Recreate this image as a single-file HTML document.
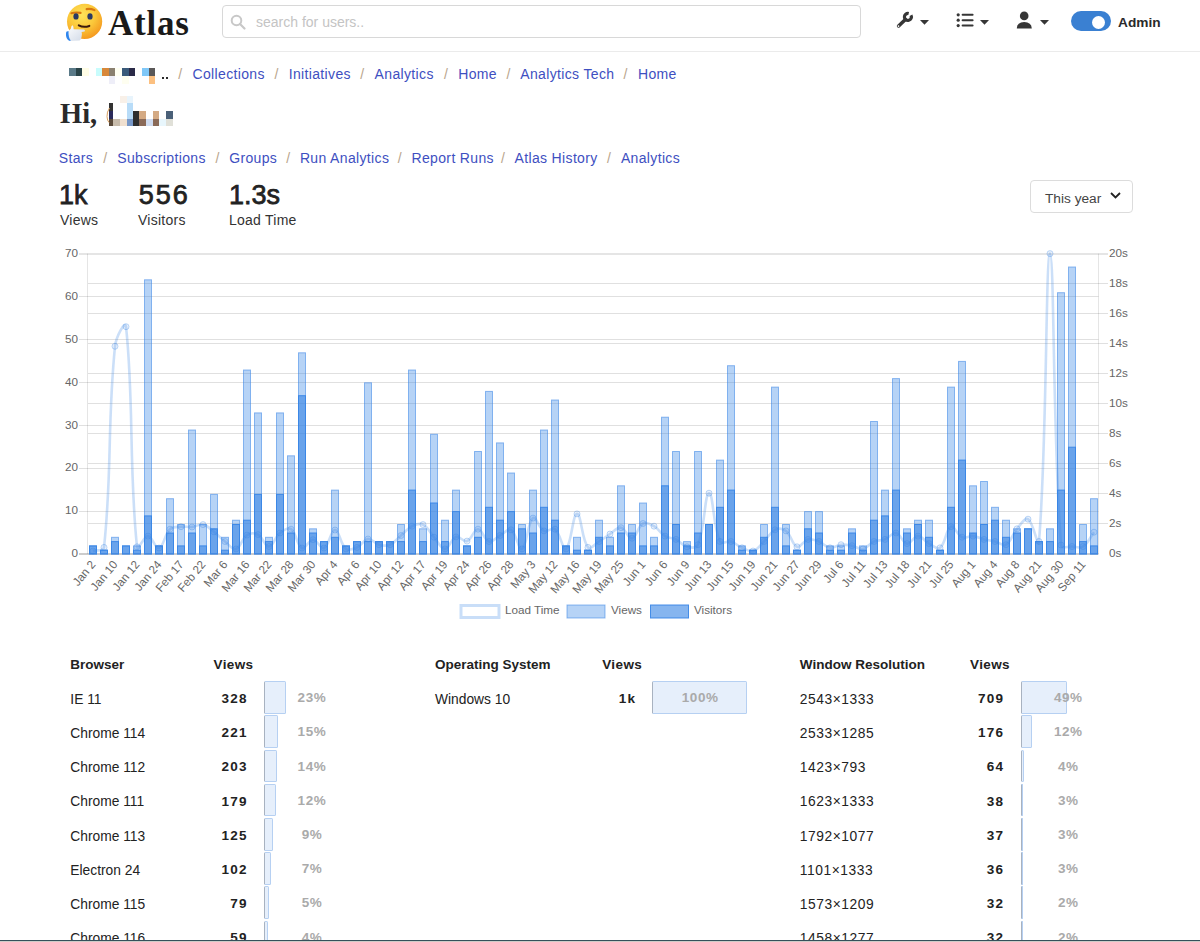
<!DOCTYPE html>
<html><head><meta charset="utf-8">
<style>
*{box-sizing:border-box;margin:0;padding:0}
html,body{width:1200px;height:942px;overflow:hidden;background:#fff}
.sep{font-size:14px;color:#b5b0aa}
body{position:relative;font-family:"Liberation Sans",sans-serif;color:#212529}
.a{position:absolute;white-space:nowrap}
.hdr{position:absolute;left:0;top:0;width:1200px;height:52px;border-bottom:1px solid #ebebeb}
.logo{font-family:"Liberation Serif",serif;font-weight:bold;font-size:36px;color:#1a1a1a}
.search{left:222px;top:5px;width:639px;height:33px;border:1px solid #d8d8d8;border-radius:4px}
.ph{font-size:14px;color:#c4c4c4}
.lnk{font-size:14px;color:#3e4fc1;letter-spacing:0.35px}
.sep{font-size:14px;color:#b9a58c}
.hi{font-family:"Liberation Serif",serif;font-weight:bold;font-size:28.5px;color:#2a2a2a}
.stat{font-size:27px;font-weight:normal;color:#222;-webkit-text-stroke:0.75px #222}
.slab{font-size:14px;color:#333;letter-spacing:0.25px}
.tk{font-family:"Liberation Sans",sans-serif;font-size:11.7px;fill:#666}
.th{font-size:13.5px;font-weight:bold;color:#222;line-height:15px;letter-spacing:0px}
.td{font-size:13.8px;color:#222;line-height:15px;letter-spacing:0px}
.tn{font-size:13.5px;font-weight:bold;color:#222;text-align:right;line-height:15px;letter-spacing:1.2px;margin-right:-1.2px}
.pb{position:absolute;height:32.5px;background:#e6effb;border:1px solid #b6d0f2;border-left-color:#a8b2c0;border-radius:1.5px}
.pt{font-size:13.5px;font-weight:bold;color:#aaa;text-align:center;width:95px;line-height:15px;letter-spacing:0.6px;text-indent:0.6px}
.px{position:absolute}
</style></head><body>
<div class="hdr"></div>
<svg class="a" style="left:62px;top:0px" width="44" height="44" viewBox="0 0 44 44">
<defs><radialGradient id="fg" cx="0.42" cy="0.32" r="0.75"><stop offset="0" stop-color="#fde45a"/><stop offset="0.5" stop-color="#fbc83a"/><stop offset="1" stop-color="#f3901a"/></radialGradient>
<linearGradient id="hg" x1="0" y1="0" x2="1" y2="1"><stop offset="0" stop-color="#ffffff"/><stop offset="1" stop-color="#cfd8e6"/></linearGradient></defs>
<circle cx="22.6" cy="21.4" r="17.6" fill="url(#fg)"/>
<path d="M9.4 13.2 Q13.8 12.0 18.6 12.9" stroke="#d9770f" stroke-width="2.1" fill="none" stroke-linecap="round"/>
<path d="M24.6 9.1 Q28.5 8.4 32.5 10.1" stroke="#d9770f" stroke-width="2.1" fill="none" stroke-linecap="round"/>
<ellipse cx="14" cy="16.4" rx="2.6" ry="3.2" fill="#2c3a63"/>
<ellipse cx="28" cy="16.4" rx="2.6" ry="3.2" fill="#2c3a63"/>
<path d="M16.8 25.3 Q21.5 28.0 27.3 25.9" stroke="#3d1a0c" stroke-width="2.1" fill="none" stroke-linecap="round"/>
<path d="M4.6 32 Q7.5 30.6 8.8 28.8 Q9.4 25.6 10.3 25.2 Q11.6 25.6 11.6 29.3 L22.2 29.4 Q23.6 30.2 22.6 31.4 L19.6 32.1 Q20.4 34.5 19.6 36.8 Q19.6 39.2 17.6 40.4 L8.2 41 Q5 39.6 4.6 32 Z" fill="url(#hg)"/>
<path d="M4.3 31.8 Q3.2 36.5 5.6 39.6 Q6.6 40.8 8.2 41.1 L8.6 40.2 Q6.3 37.6 6.5 31 Z" fill="#2f86ee"/>
</svg>

<div class="a logo" style="left:108px;top:3.5px;font-size:35px;letter-spacing:0.8px">Atlas</div>
<div class="a search"></div>
<svg class="a" style="left:230px;top:14px" width="16" height="16" viewBox="0 0 16 16"><circle cx="6.5" cy="6.5" r="4.8" fill="none" stroke="#c8c8c8" stroke-width="2"/><path d="M10 10 L14.5 14.5" stroke="#c8c8c8" stroke-width="2.2" stroke-linecap="round"/></svg>
<div class="a ph" style="left:256px;top:14px">search for users..</div>
<svg class="a" style="left:894px;top:10px" width="20" height="20" viewBox="0 0 20 20">
<path d="M16.99 5.26 A3.5 3.5 0 1 1 14.69 3.49" stroke="#363636" stroke-width="3.2" fill="none"/>
<path d="M4.6 16.0 L11.4 9.4" stroke="#363636" stroke-width="3.5" stroke-linecap="round"/>
<circle cx="4.5" cy="16.1" r="0.85" fill="#fff"/>
</svg>
<svg class="a" style="left:919px;top:19px" width="11" height="7" viewBox="0 0 11 7"><path d="M1 1 H10 L5.5 5.8 Z" fill="#363636"/></svg>
<svg class="a" style="left:955px;top:12px" width="20" height="17" viewBox="0 0 20 17">
<circle cx="3.2" cy="2.8" r="1.6" fill="#363636"/><circle cx="3.2" cy="8.2" r="1.6" fill="#363636"/><circle cx="3.2" cy="13.6" r="1.6" fill="#363636"/>
<path d="M7.6 2.8 H17.6 M7.6 8.2 H17.6 M7.6 13.6 H17.6" stroke="#363636" stroke-width="2" stroke-linecap="round"/>
</svg>
<svg class="a" style="left:979px;top:19px" width="11" height="7" viewBox="0 0 11 7"><path d="M1 1 H10 L5.5 5.8 Z" fill="#363636"/></svg>
<svg class="a" style="left:1015px;top:10px" width="18" height="20" viewBox="0 0 18 20">
<circle cx="9.2" cy="5.9" r="4.3" fill="#363636"/>
<path d="M1.8 18.4 Q2 12.2 9.2 12.1 Q16.4 12.2 16.8 18.4 Z" fill="#363636"/>
</svg>
<svg class="a" style="left:1039px;top:19px" width="11" height="7" viewBox="0 0 11 7"><path d="M1 1 H10 L5.5 5.8 Z" fill="#363636"/></svg>

<div class="a" style="left:1071px;top:11px;width:40px;height:20px;border-radius:10px;background:#3a80d2"></div>
<div class="a" style="left:1091.5px;top:15.5px;width:13px;height:13px;border-radius:50%;background:#fff"></div>
<div class="a" style="left:1118px;top:14.5px;font-size:13.7px;font-weight:bold;color:#2a2a2a">Admin</div>
<div class="px" style="left:69px;top:68.3px;width:6.700000000000003px;height:8.0px;background:#5a7a88"></div><div class="px" style="left:75.7px;top:68.3px;width:6.299999999999997px;height:8.0px;background:#2a4448"></div><div class="px" style="left:82px;top:68.3px;width:6.700000000000003px;height:8.0px;background:#fffde6"></div><div class="px" style="left:95.7px;top:68.3px;width:6.599999999999994px;height:8.0px;background:#c8fcfc"></div><div class="px" style="left:102.3px;top:68.3px;width:6.700000000000003px;height:8.0px;background:#d8883a"></div><div class="px" style="left:109px;top:68.3px;width:6.299999999999997px;height:8.0px;background:#8a8070"></div><div class="px" style="left:115.3px;top:68.3px;width:6.700000000000003px;height:8.0px;background:#fffff2"></div><div class="px" style="left:122.3px;top:68.3px;width:6.3999999999999915px;height:8.0px;background:#3a5a7a"></div><div class="px" style="left:128.7px;top:68.3px;width:6.300000000000011px;height:8.0px;background:#2a2a48"></div><div class="px" style="left:142px;top:68.3px;width:6.75px;height:8.0px;background:#80c8f8"></div><div class="px" style="left:148.75px;top:68.3px;width:6.25px;height:8.0px;background:#5a5858"></div><div class="px" style="left:109px;top:76.3px;width:6.299999999999997px;height:8.0px;background:#eeeef8"></div><div class="px" style="left:122.3px;top:76.3px;width:6.3999999999999915px;height:8.0px;background:#fefef0"></div><div class="px" style="left:148.75px;top:76.3px;width:6.25px;height:8.0px;background:#fcc080"></div>
<div class="px" style="left:162px;top:77px;width:2px;height:2px;background:#2a2a2a"></div><div class="px" style="left:166px;top:77px;width:2px;height:2px;background:#2a2a2a"></div>
<div class="a sep" style="left:178.2px;top:66.4px">/</div>
<div class="a sep" style="left:274.4px;top:66.4px">/</div>
<div class="a sep" style="left:360.3px;top:66.4px">/</div>
<div class="a sep" style="left:443.9px;top:66.4px">/</div>
<div class="a sep" style="left:506.4px;top:66.4px">/</div>
<div class="a sep" style="left:623.45px;top:66.4px">/</div>
<div class="a lnk" style="left:192.5px;top:66.4px">Collections</div>
<div class="a lnk" style="left:288.7px;top:66.4px">Initiatives</div>
<div class="a lnk" style="left:374.6px;top:66.4px">Analytics</div>
<div class="a lnk" style="left:458.2px;top:66.4px">Home</div>
<div class="a lnk" style="left:520.25px;top:66.4px">Analytics Tech</div>
<div class="a lnk" style="left:638px;top:66.4px">Home</div>
<div class="a hi" style="left:60px;top:97.5px">Hi,</div>
<div class="px" style="left:120px;top:96px;width:7px;height:7.200000000000003px;background:#f8f0e8"></div><div class="px" style="left:127px;top:96px;width:6px;height:7.200000000000003px;background:#e8f4fc"></div><div class="px" style="left:109px;top:103.2px;width:4px;height:7.3999999999999915px;background:#333"></div><div class="px" style="left:127px;top:103.2px;width:6px;height:7.3999999999999915px;background:#b8dcf8"></div><div class="px" style="left:109px;top:110.6px;width:4px;height:8.100000000000009px;background:#2a2a5a"></div><div class="px" style="left:127px;top:110.6px;width:6px;height:8.100000000000009px;background:#b8dcf8"></div><div class="px" style="left:133px;top:110.6px;width:6px;height:8.100000000000009px;background:#2e2e2e"></div><div class="px" style="left:139px;top:110.6px;width:7px;height:8.100000000000009px;background:#d4aa84"></div><div class="px" style="left:152.5px;top:110.6px;width:6.5px;height:8.100000000000009px;background:#d4aa84"></div><div class="px" style="left:166px;top:110.6px;width:6.5px;height:8.100000000000009px;background:#4a6078"></div><div class="px" style="left:109px;top:118.7px;width:4px;height:7.049999999999997px;background:#5a4a3a"></div><div class="px" style="left:113px;top:118.7px;width:7px;height:7.049999999999997px;background:#c8bcac"></div><div class="px" style="left:120px;top:118.7px;width:7px;height:7.049999999999997px;background:#f0e0d0"></div><div class="px" style="left:127px;top:118.7px;width:6px;height:7.049999999999997px;background:#7898c8"></div><div class="px" style="left:133px;top:118.7px;width:6px;height:7.049999999999997px;background:#2e2e2e"></div><div class="px" style="left:139px;top:118.7px;width:7px;height:7.049999999999997px;background:#8a6a58"></div><div class="px" style="left:146px;top:118.7px;width:6.5px;height:7.049999999999997px;background:#d0dcf0"></div><div class="px" style="left:152.5px;top:118.7px;width:6.5px;height:7.049999999999997px;background:#8a6a58"></div><div class="px" style="left:159px;top:118.7px;width:7px;height:7.049999999999997px;background:#e8f6fc"></div><div class="px" style="left:166px;top:118.7px;width:6.5px;height:7.049999999999997px;background:#e0e0d8"></div>
<svg class="a" style="left:104px;top:102px" width="8" height="24" viewBox="0 0 8 24"><path d="M5.5 6 Q2.8 10 3 14.5 Q3.2 18.5 5 20.5" stroke="#d9a060" stroke-width="1" fill="none"/></svg>
<div class="a sep" style="left:103.2px;top:150px">/</div>
<div class="a sep" style="left:215.5px;top:150px">/</div>
<div class="a sep" style="left:286.2px;top:150px">/</div>
<div class="a sep" style="left:397.8px;top:150px">/</div>
<div class="a sep" style="left:501.0px;top:150px">/</div>
<div class="a sep" style="left:606.9000000000001px;top:150px">/</div>
<div class="a lnk" style="left:58.8px;top:150px">Stars</div>
<div class="a lnk" style="left:117.2px;top:150px">Subscriptions</div>
<div class="a lnk" style="left:229.2px;top:150px">Groups</div>
<div class="a lnk" style="left:299.9px;top:150px">Run Analytics</div>
<div class="a lnk" style="left:411.5px;top:150px">Report Runs</div>
<div class="a lnk" style="left:514.5px;top:150px">Atlas History</div>
<div class="a lnk" style="left:620.9px;top:150px">Analytics</div>
<div class="a stat" style="left:59px;top:180px">1k</div>
<div class="a stat" style="left:138.8px;top:180px;letter-spacing:1.9px">556</div>
<div class="a stat" style="left:229px;top:180px">1.3s</div>
<div class="a slab" style="left:60px;top:212px">Views</div>
<div class="a slab" style="left:138px;top:212px">Visitors</div>
<div class="a slab" style="left:229px;top:212px">Load Time</div>
<div class="a" style="left:1030px;top:180px;width:103px;height:33px;border:1px solid #dcdcdc;border-radius:4px"></div>
<div class="a" style="left:1045px;top:190.5px;font-size:13.7px;color:#444">This year</div>
<svg class="a" style="left:1109px;top:191px" width="13" height="9" viewBox="0 0 13 9"><path d="M2 2 L6.5 6.5 L11 2" fill="none" stroke="#222" stroke-width="1.8"/></svg>
<svg class="chart" width="1200" height="942" viewBox="0 0 1200 942" style="position:absolute;left:0;top:0">
<path d="M79 511.5H1098.5 M79 468.5H1098.5 M79 425.5H1098.5 M79 382.5H1098.5 M79 339.5H1098.5 M79 296.5H1098.5 M88 523.5H1108 M88 493.5H1108 M88 463.5H1108 M88 433.5H1108 M88 403.5H1108 M88 373.5H1108 M88 343.5H1108 M88 313.5H1108 M88 283.5H1108" stroke="rgba(0,0,0,0.12)" stroke-width="1" fill="none"/>
<path d="M87.5 253.6V554.0 M1098.5 253.6V554.0" stroke="rgba(0,0,0,0.1)" stroke-width="1" fill="none"/>
<path d="M79 254H1098.5 M88 254H1108" stroke="rgba(0,0,0,0.1)" stroke-width="2" fill="none"/>
<path d="M79 554.0H1098.5" stroke="rgba(0,0,0,0.2)" stroke-width="2" fill="none"/>
<text x="78" y="557.2" text-anchor="end" class="tk">0</text>
<text x="78" y="514.3" text-anchor="end" class="tk">10</text>
<text x="78" y="471.4" text-anchor="end" class="tk">20</text>
<text x="78" y="428.5" text-anchor="end" class="tk">30</text>
<text x="78" y="385.5" text-anchor="end" class="tk">40</text>
<text x="78" y="342.6" text-anchor="end" class="tk">50</text>
<text x="78" y="299.7" text-anchor="end" class="tk">60</text>
<text x="78" y="256.8" text-anchor="end" class="tk">70</text>
<text x="1109" y="557.2" class="tk">0s</text>
<text x="1109" y="527.2" class="tk">2s</text>
<text x="1109" y="497.1" class="tk">4s</text>
<text x="1109" y="467.1" class="tk">6s</text>
<text x="1109" y="437.0" class="tk">8s</text>
<text x="1109" y="407.0" class="tk">10s</text>
<text x="1109" y="377.0" class="tk">12s</text>
<text x="1109" y="346.9" class="tk">14s</text>
<text x="1109" y="316.9" class="tk">16s</text>
<text x="1109" y="286.8" class="tk">18s</text>
<text x="1109" y="256.8" class="tk">20s</text>
<g fill="rgba(54,132,229,0.36)" stroke="rgba(54,132,229,0.55)" stroke-width="1"><rect x="89.5" y="545.9" width="7" height="8.1"/><rect x="100.5" y="550.2" width="7" height="3.8"/><rect x="111.5" y="537.3" width="7" height="16.7"/><rect x="122.5" y="545.9" width="7" height="8.1"/><rect x="133.5" y="545.9" width="7" height="8.1"/><rect x="144.5" y="279.8" width="7" height="274.2"/><rect x="155.5" y="545.9" width="7" height="8.1"/><rect x="166.5" y="498.7" width="7" height="55.3"/><rect x="177.5" y="524.5" width="7" height="29.5"/><rect x="188.5" y="430.0" width="7" height="124.0"/><rect x="199.5" y="524.5" width="7" height="29.5"/><rect x="210.5" y="494.4" width="7" height="59.6"/><rect x="221.5" y="537.3" width="7" height="16.7"/><rect x="232.5" y="520.2" width="7" height="33.8"/><rect x="243.5" y="370.0" width="7" height="184.0"/><rect x="254.5" y="412.9" width="7" height="141.1"/><rect x="265.5" y="537.3" width="7" height="16.7"/><rect x="276.5" y="412.9" width="7" height="141.1"/><rect x="287.5" y="455.8" width="7" height="98.2"/><rect x="298.5" y="352.8" width="7" height="201.2"/><rect x="309.5" y="528.8" width="7" height="25.2"/><rect x="320.5" y="541.6" width="7" height="12.4"/><rect x="331.5" y="490.1" width="7" height="63.9"/><rect x="342.5" y="545.9" width="7" height="8.1"/><rect x="353.5" y="541.6" width="7" height="12.4"/><rect x="364.5" y="382.8" width="7" height="171.2"/><rect x="375.5" y="541.6" width="7" height="12.4"/><rect x="386.5" y="541.6" width="7" height="12.4"/><rect x="397.5" y="524.5" width="7" height="29.5"/><rect x="408.5" y="370.0" width="7" height="184.0"/><rect x="419.5" y="528.8" width="7" height="25.2"/><rect x="430.5" y="434.3" width="7" height="119.7"/><rect x="441.5" y="520.2" width="7" height="33.8"/><rect x="452.5" y="490.1" width="7" height="63.9"/><rect x="463.5" y="545.9" width="7" height="8.1"/><rect x="474.5" y="451.5" width="7" height="102.5"/><rect x="485.5" y="391.4" width="7" height="162.6"/><rect x="496.5" y="442.9" width="7" height="111.1"/><rect x="507.5" y="473.0" width="7" height="81.0"/><rect x="518.5" y="524.5" width="7" height="29.5"/><rect x="529.5" y="490.1" width="7" height="63.9"/><rect x="540.5" y="430.0" width="7" height="124.0"/><rect x="551.5" y="400.0" width="7" height="154.0"/><rect x="562.5" y="545.9" width="7" height="8.1"/><rect x="573.5" y="537.3" width="7" height="16.7"/><rect x="584.5" y="550.2" width="7" height="3.8"/><rect x="595.5" y="520.2" width="7" height="33.8"/><rect x="606.5" y="537.3" width="7" height="16.7"/><rect x="617.5" y="485.8" width="7" height="68.2"/><rect x="628.5" y="524.5" width="7" height="29.5"/><rect x="639.5" y="503.0" width="7" height="51.0"/><rect x="650.5" y="537.3" width="7" height="16.7"/><rect x="661.5" y="417.2" width="7" height="136.8"/><rect x="672.5" y="451.5" width="7" height="102.5"/><rect x="683.5" y="541.6" width="7" height="12.4"/><rect x="694.5" y="451.5" width="7" height="102.5"/><rect x="705.5" y="524.5" width="7" height="29.5"/><rect x="716.5" y="460.1" width="7" height="93.9"/><rect x="727.5" y="365.7" width="7" height="188.3"/><rect x="738.5" y="545.9" width="7" height="8.1"/><rect x="749.5" y="550.2" width="7" height="3.8"/><rect x="760.5" y="524.5" width="7" height="29.5"/><rect x="771.5" y="387.1" width="7" height="166.9"/><rect x="782.5" y="524.5" width="7" height="29.5"/><rect x="793.5" y="550.2" width="7" height="3.8"/><rect x="804.5" y="511.6" width="7" height="42.4"/><rect x="815.5" y="511.6" width="7" height="42.4"/><rect x="826.5" y="545.9" width="7" height="8.1"/><rect x="837.5" y="545.9" width="7" height="8.1"/><rect x="848.5" y="528.8" width="7" height="25.2"/><rect x="859.5" y="545.9" width="7" height="8.1"/><rect x="870.5" y="421.5" width="7" height="132.5"/><rect x="881.5" y="490.1" width="7" height="63.9"/><rect x="892.5" y="378.6" width="7" height="175.4"/><rect x="903.5" y="528.8" width="7" height="25.2"/><rect x="914.5" y="520.2" width="7" height="33.8"/><rect x="925.5" y="520.2" width="7" height="33.8"/><rect x="936.5" y="550.2" width="7" height="3.8"/><rect x="947.5" y="387.1" width="7" height="166.9"/><rect x="958.5" y="361.4" width="7" height="192.6"/><rect x="969.5" y="485.8" width="7" height="68.2"/><rect x="980.5" y="481.5" width="7" height="72.5"/><rect x="991.5" y="507.3" width="7" height="46.7"/><rect x="1002.5" y="520.2" width="7" height="33.8"/><rect x="1013.5" y="528.8" width="7" height="25.2"/><rect x="1024.5" y="528.8" width="7" height="25.2"/><rect x="1035.5" y="541.6" width="7" height="12.4"/><rect x="1046.5" y="528.8" width="7" height="25.2"/><rect x="1057.5" y="292.7" width="7" height="261.3"/><rect x="1068.5" y="267.0" width="7" height="287.0"/><rect x="1079.5" y="524.5" width="7" height="29.5"/><rect x="1090.5" y="498.7" width="7" height="55.3"/></g>
<g fill="rgba(54,132,229,0.6)" stroke="rgba(54,132,229,0.9)" stroke-width="1"><rect x="89.5" y="545.9" width="7" height="8.1"/><rect x="100.5" y="550.2" width="7" height="3.8"/><rect x="111.5" y="541.6" width="7" height="12.4"/><rect x="122.5" y="545.9" width="7" height="8.1"/><rect x="133.5" y="550.2" width="7" height="3.8"/><rect x="144.5" y="515.9" width="7" height="38.1"/><rect x="155.5" y="545.9" width="7" height="8.1"/><rect x="166.5" y="533.0" width="7" height="21.0"/><rect x="177.5" y="545.9" width="7" height="8.1"/><rect x="188.5" y="533.0" width="7" height="21.0"/><rect x="199.5" y="545.9" width="7" height="8.1"/><rect x="210.5" y="528.8" width="7" height="25.2"/><rect x="221.5" y="550.2" width="7" height="3.8"/><rect x="232.5" y="524.5" width="7" height="29.5"/><rect x="243.5" y="520.2" width="7" height="33.8"/><rect x="254.5" y="494.4" width="7" height="59.6"/><rect x="265.5" y="541.6" width="7" height="12.4"/><rect x="276.5" y="494.4" width="7" height="59.6"/><rect x="287.5" y="533.0" width="7" height="21.0"/><rect x="298.5" y="395.7" width="7" height="158.3"/><rect x="309.5" y="533.0" width="7" height="21.0"/><rect x="320.5" y="541.6" width="7" height="12.4"/><rect x="331.5" y="537.3" width="7" height="16.7"/><rect x="342.5" y="545.9" width="7" height="8.1"/><rect x="353.5" y="541.6" width="7" height="12.4"/><rect x="364.5" y="541.6" width="7" height="12.4"/><rect x="375.5" y="541.6" width="7" height="12.4"/><rect x="386.5" y="541.6" width="7" height="12.4"/><rect x="397.5" y="541.6" width="7" height="12.4"/><rect x="408.5" y="490.1" width="7" height="63.9"/><rect x="419.5" y="541.6" width="7" height="12.4"/><rect x="430.5" y="503.0" width="7" height="51.0"/><rect x="441.5" y="541.6" width="7" height="12.4"/><rect x="452.5" y="511.6" width="7" height="42.4"/><rect x="463.5" y="545.9" width="7" height="8.1"/><rect x="474.5" y="537.3" width="7" height="16.7"/><rect x="485.5" y="507.3" width="7" height="46.7"/><rect x="496.5" y="520.2" width="7" height="33.8"/><rect x="507.5" y="511.6" width="7" height="42.4"/><rect x="518.5" y="528.8" width="7" height="25.2"/><rect x="529.5" y="533.0" width="7" height="21.0"/><rect x="540.5" y="507.3" width="7" height="46.7"/><rect x="551.5" y="520.2" width="7" height="33.8"/><rect x="562.5" y="545.9" width="7" height="8.1"/><rect x="573.5" y="550.2" width="7" height="3.8"/><rect x="584.5" y="550.2" width="7" height="3.8"/><rect x="595.5" y="537.3" width="7" height="16.7"/><rect x="606.5" y="545.9" width="7" height="8.1"/><rect x="617.5" y="533.0" width="7" height="21.0"/><rect x="628.5" y="533.0" width="7" height="21.0"/><rect x="639.5" y="545.9" width="7" height="8.1"/><rect x="650.5" y="545.9" width="7" height="8.1"/><rect x="661.5" y="485.8" width="7" height="68.2"/><rect x="672.5" y="524.5" width="7" height="29.5"/><rect x="683.5" y="545.9" width="7" height="8.1"/><rect x="694.5" y="533.0" width="7" height="21.0"/><rect x="705.5" y="524.5" width="7" height="29.5"/><rect x="716.5" y="507.3" width="7" height="46.7"/><rect x="727.5" y="490.1" width="7" height="63.9"/><rect x="738.5" y="550.2" width="7" height="3.8"/><rect x="749.5" y="550.2" width="7" height="3.8"/><rect x="760.5" y="537.3" width="7" height="16.7"/><rect x="771.5" y="507.3" width="7" height="46.7"/><rect x="782.5" y="545.9" width="7" height="8.1"/><rect x="793.5" y="550.2" width="7" height="3.8"/><rect x="804.5" y="528.8" width="7" height="25.2"/><rect x="815.5" y="533.0" width="7" height="21.0"/><rect x="826.5" y="550.2" width="7" height="3.8"/><rect x="837.5" y="550.2" width="7" height="3.8"/><rect x="848.5" y="533.0" width="7" height="21.0"/><rect x="859.5" y="550.2" width="7" height="3.8"/><rect x="870.5" y="520.2" width="7" height="33.8"/><rect x="881.5" y="515.9" width="7" height="38.1"/><rect x="892.5" y="490.1" width="7" height="63.9"/><rect x="903.5" y="533.0" width="7" height="21.0"/><rect x="914.5" y="524.5" width="7" height="29.5"/><rect x="925.5" y="537.3" width="7" height="16.7"/><rect x="936.5" y="550.2" width="7" height="3.8"/><rect x="947.5" y="507.3" width="7" height="46.7"/><rect x="958.5" y="460.1" width="7" height="93.9"/><rect x="969.5" y="533.0" width="7" height="21.0"/><rect x="980.5" y="524.5" width="7" height="29.5"/><rect x="991.5" y="520.2" width="7" height="33.8"/><rect x="1002.5" y="537.3" width="7" height="16.7"/><rect x="1013.5" y="533.0" width="7" height="21.0"/><rect x="1024.5" y="528.8" width="7" height="25.2"/><rect x="1035.5" y="541.6" width="7" height="12.4"/><rect x="1046.5" y="541.6" width="7" height="12.4"/><rect x="1057.5" y="490.1" width="7" height="63.9"/><rect x="1068.5" y="447.2" width="7" height="106.8"/><rect x="1079.5" y="541.6" width="7" height="12.4"/><rect x="1090.5" y="545.9" width="7" height="8.1"/></g>
<path d="M93.0 551.0 C97.4 549.6 103.5 551.8 104.0 547.4 C112.3 470.0 107.1 425.7 115.0 346.3 C115.9 337.4 125.2 319.3 126.0 326.7 C134.0 399.5 128.8 468.5 137.0 546.8 C137.6 552.2 143.7 535.9 148.0 536.1 C152.5 536.4 155.2 549.2 159.0 548.0 C164.0 546.4 164.2 534.8 170.0 529.2 C173.0 526.3 176.5 527.1 181.0 526.7 C185.3 526.2 187.7 527.4 192.0 527.0 C196.5 526.5 199.0 523.6 203.0 524.6 C207.8 525.6 209.8 528.7 214.0 531.9 C218.6 535.5 220.4 538.0 225.0 541.5 C229.2 544.8 232.2 550.0 236.0 548.9 C241.0 547.4 241.6 538.6 247.0 535.1 C250.4 532.9 254.4 532.8 258.0 534.6 C263.2 537.3 264.8 546.8 269.0 546.5 C273.6 546.1 274.7 537.1 280.0 533.0 C283.5 530.2 287.9 527.1 291.0 529.2 C296.7 533.1 296.6 545.4 302.0 548.0 C305.4 549.6 308.6 539.7 313.0 539.7 C317.4 539.7 320.5 549.5 324.0 548.0 C329.3 545.6 330.7 529.8 335.0 530.0 C339.5 530.2 340.2 544.3 346.0 548.9 C349.0 551.2 353.1 549.2 357.0 547.4 C361.9 545.2 363.4 539.6 368.0 539.0 C372.2 538.5 374.3 543.5 379.0 544.7 C383.1 545.8 386.2 546.3 390.0 544.7 C395.0 542.6 396.6 539.2 401.0 535.5 C405.4 531.8 407.0 528.7 412.0 526.2 C415.8 524.3 419.5 522.8 423.0 524.6 C428.3 527.2 429.5 532.2 434.0 537.2 C438.3 541.9 440.6 549.0 445.0 548.9 C449.4 548.8 450.9 538.7 456.0 536.9 C459.7 535.6 463.3 542.4 467.0 541.1 C472.1 539.3 473.6 529.1 478.0 529.2 C482.4 529.3 484.0 540.1 489.0 541.5 C492.8 542.6 495.6 537.9 500.0 535.5 C504.4 533.2 507.8 527.9 511.0 529.8 C516.6 533.2 518.5 550.8 522.0 548.9 C527.3 546.1 527.2 522.9 533.0 518.1 C536.0 515.7 538.7 528.2 544.0 530.9 C547.5 532.6 552.1 526.8 555.0 529.2 C560.9 534.0 562.7 551.2 566.0 548.9 C571.5 545.1 572.5 514.2 577.0 513.9 C581.3 513.6 581.5 539.2 588.0 547.4 C590.3 550.3 594.7 544.1 599.0 541.5 C603.5 538.8 605.5 536.9 610.0 534.0 C614.3 531.3 617.0 527.0 621.0 527.7 C625.8 528.6 628.0 539.0 632.0 538.2 C636.8 537.3 637.6 526.5 643.0 523.5 C646.4 521.7 650.2 524.0 654.0 526.2 C659.0 529.1 660.0 533.1 665.0 536.1 C668.8 538.4 671.9 537.4 676.0 539.4 C680.7 541.7 682.2 545.7 687.0 546.8 C691.0 547.8 696.5 548.4 698.0 544.7 C705.3 527.0 704.5 493.8 709.0 493.2 C713.3 492.6 712.8 525.7 720.0 541.5 C721.6 545.0 726.9 540.4 731.0 541.5 C735.7 542.9 737.4 545.9 742.0 547.8 C746.2 549.6 749.1 552.1 753.0 551.0 C757.9 549.6 759.8 545.6 764.0 541.5 C768.6 537.1 769.8 532.3 775.0 529.8 C778.6 528.1 782.8 528.4 786.0 530.9 C791.6 535.2 791.8 544.8 797.0 546.8 C800.6 548.2 803.2 540.6 808.0 539.4 C812.0 538.5 814.9 540.0 819.0 541.5 C823.7 543.3 825.4 547.2 830.0 547.8 C834.2 548.4 836.5 545.1 841.0 544.7 C845.3 544.3 847.7 544.9 852.0 545.7 C856.5 546.6 858.9 549.7 863.0 548.9 C867.7 548.0 869.2 543.6 874.0 541.5 C878.0 539.8 880.9 541.0 885.0 539.4 C889.7 537.6 892.0 532.2 896.0 533.0 C900.8 533.9 902.3 543.0 907.0 543.6 C911.1 544.2 913.6 536.1 918.0 536.1 C922.4 536.1 924.3 541.1 929.0 543.6 C933.1 545.8 937.1 550.1 940.0 547.8 C945.9 543.3 945.6 529.3 951.0 526.7 C954.4 525.0 956.9 535.0 962.0 537.2 C965.7 538.8 968.7 535.7 973.0 536.1 C977.5 536.6 979.5 538.3 984.0 539.4 C988.3 540.5 990.6 540.5 995.0 541.5 C999.4 542.6 1002.7 546.6 1006.0 544.7 C1011.5 541.5 1012.0 534.6 1017.0 528.8 C1020.8 524.4 1024.7 517.3 1028.0 519.2 C1033.5 522.4 1038.3 550.0 1039.0 541.5 C1047.1 443.8 1045.6 253.6 1050.0 253.6 C1054.4 254.3 1052.5 432.1 1061.0 545.0 C1061.3 549.3 1067.6 546.2 1072.0 546.5 C1076.4 546.8 1079.7 548.7 1083.0 546.5 C1088.5 542.9 1089.6 537.9 1094.0 532.2" stroke="rgba(54,132,229,0.26)" stroke-width="2.6" fill="none"/>
<g fill="rgba(54,132,229,0.1)" stroke="rgba(54,132,229,0.3)" stroke-width="1"><circle cx="93" cy="551.0" r="3"/><circle cx="104" cy="547.4" r="3"/><circle cx="115" cy="346.3" r="3"/><circle cx="126" cy="326.7" r="3"/><circle cx="137" cy="546.8" r="3"/><circle cx="148" cy="536.1" r="3"/><circle cx="159" cy="548.0" r="3"/><circle cx="170" cy="529.2" r="3"/><circle cx="181" cy="526.7" r="3"/><circle cx="192" cy="527.0" r="3"/><circle cx="203" cy="524.6" r="3"/><circle cx="214" cy="531.9" r="3"/><circle cx="225" cy="541.5" r="3"/><circle cx="236" cy="548.9" r="3"/><circle cx="247" cy="535.1" r="3"/><circle cx="258" cy="534.6" r="3"/><circle cx="269" cy="546.5" r="3"/><circle cx="280" cy="533.0" r="3"/><circle cx="291" cy="529.2" r="3"/><circle cx="302" cy="548.0" r="3"/><circle cx="313" cy="539.7" r="3"/><circle cx="324" cy="548.0" r="3"/><circle cx="335" cy="530.0" r="3"/><circle cx="346" cy="548.9" r="3"/><circle cx="357" cy="547.4" r="3"/><circle cx="368" cy="539.0" r="3"/><circle cx="379" cy="544.7" r="3"/><circle cx="390" cy="544.7" r="3"/><circle cx="401" cy="535.5" r="3"/><circle cx="412" cy="526.2" r="3"/><circle cx="423" cy="524.6" r="3"/><circle cx="434" cy="537.2" r="3"/><circle cx="445" cy="548.9" r="3"/><circle cx="456" cy="536.9" r="3"/><circle cx="467" cy="541.1" r="3"/><circle cx="478" cy="529.2" r="3"/><circle cx="489" cy="541.5" r="3"/><circle cx="500" cy="535.5" r="3"/><circle cx="511" cy="529.8" r="3"/><circle cx="522" cy="548.9" r="3"/><circle cx="533" cy="518.1" r="3"/><circle cx="544" cy="530.9" r="3"/><circle cx="555" cy="529.2" r="3"/><circle cx="566" cy="548.9" r="3"/><circle cx="577" cy="513.9" r="3"/><circle cx="588" cy="547.4" r="3"/><circle cx="599" cy="541.5" r="3"/><circle cx="610" cy="534.0" r="3"/><circle cx="621" cy="527.7" r="3"/><circle cx="632" cy="538.2" r="3"/><circle cx="643" cy="523.5" r="3"/><circle cx="654" cy="526.2" r="3"/><circle cx="665" cy="536.1" r="3"/><circle cx="676" cy="539.4" r="3"/><circle cx="687" cy="546.8" r="3"/><circle cx="698" cy="544.7" r="3"/><circle cx="709" cy="493.2" r="3"/><circle cx="720" cy="541.5" r="3"/><circle cx="731" cy="541.5" r="3"/><circle cx="742" cy="547.8" r="3"/><circle cx="753" cy="551.0" r="3"/><circle cx="764" cy="541.5" r="3"/><circle cx="775" cy="529.8" r="3"/><circle cx="786" cy="530.9" r="3"/><circle cx="797" cy="546.8" r="3"/><circle cx="808" cy="539.4" r="3"/><circle cx="819" cy="541.5" r="3"/><circle cx="830" cy="547.8" r="3"/><circle cx="841" cy="544.7" r="3"/><circle cx="852" cy="545.7" r="3"/><circle cx="863" cy="548.9" r="3"/><circle cx="874" cy="541.5" r="3"/><circle cx="885" cy="539.4" r="3"/><circle cx="896" cy="533.0" r="3"/><circle cx="907" cy="543.6" r="3"/><circle cx="918" cy="536.1" r="3"/><circle cx="929" cy="543.6" r="3"/><circle cx="940" cy="547.8" r="3"/><circle cx="951" cy="526.7" r="3"/><circle cx="962" cy="537.2" r="3"/><circle cx="973" cy="536.1" r="3"/><circle cx="984" cy="539.4" r="3"/><circle cx="995" cy="541.5" r="3"/><circle cx="1006" cy="544.7" r="3"/><circle cx="1017" cy="528.8" r="3"/><circle cx="1028" cy="519.2" r="3"/><circle cx="1039" cy="541.5" r="3"/><circle cx="1050" cy="253.6" r="3"/><circle cx="1061" cy="545.0" r="3"/><circle cx="1072" cy="546.5" r="3"/><circle cx="1083" cy="546.5" r="3"/><circle cx="1094" cy="532.2" r="3"/></g>
<text class="tk" text-anchor="end" transform="translate(93 562) rotate(-50)" dy="4.3">Jan 2</text>
<text class="tk" text-anchor="end" transform="translate(115 562) rotate(-50)" dy="4.3">Jan 10</text>
<text class="tk" text-anchor="end" transform="translate(137 562) rotate(-50)" dy="4.3">Jan 12</text>
<text class="tk" text-anchor="end" transform="translate(159 562) rotate(-50)" dy="4.3">Jan 24</text>
<text class="tk" text-anchor="end" transform="translate(181 562) rotate(-50)" dy="4.3">Feb 17</text>
<text class="tk" text-anchor="end" transform="translate(203 562) rotate(-50)" dy="4.3">Feb 22</text>
<text class="tk" text-anchor="end" transform="translate(225 562) rotate(-50)" dy="4.3">Mar 6</text>
<text class="tk" text-anchor="end" transform="translate(247 562) rotate(-50)" dy="4.3">Mar 16</text>
<text class="tk" text-anchor="end" transform="translate(269 562) rotate(-50)" dy="4.3">Mar 22</text>
<text class="tk" text-anchor="end" transform="translate(291 562) rotate(-50)" dy="4.3">Mar 28</text>
<text class="tk" text-anchor="end" transform="translate(313 562) rotate(-50)" dy="4.3">Mar 30</text>
<text class="tk" text-anchor="end" transform="translate(335 562) rotate(-50)" dy="4.3">Apr 4</text>
<text class="tk" text-anchor="end" transform="translate(357 562) rotate(-50)" dy="4.3">Apr 6</text>
<text class="tk" text-anchor="end" transform="translate(379 562) rotate(-50)" dy="4.3">Apr 10</text>
<text class="tk" text-anchor="end" transform="translate(401 562) rotate(-50)" dy="4.3">Apr 12</text>
<text class="tk" text-anchor="end" transform="translate(423 562) rotate(-50)" dy="4.3">Apr 17</text>
<text class="tk" text-anchor="end" transform="translate(445 562) rotate(-50)" dy="4.3">Apr 19</text>
<text class="tk" text-anchor="end" transform="translate(467 562) rotate(-50)" dy="4.3">Apr 24</text>
<text class="tk" text-anchor="end" transform="translate(489 562) rotate(-50)" dy="4.3">Apr 26</text>
<text class="tk" text-anchor="end" transform="translate(511 562) rotate(-50)" dy="4.3">Apr 28</text>
<text class="tk" text-anchor="end" transform="translate(533 562) rotate(-50)" dy="4.3">May 3</text>
<text class="tk" text-anchor="end" transform="translate(555 562) rotate(-50)" dy="4.3">May 12</text>
<text class="tk" text-anchor="end" transform="translate(577 562) rotate(-50)" dy="4.3">May 16</text>
<text class="tk" text-anchor="end" transform="translate(599 562) rotate(-50)" dy="4.3">May 19</text>
<text class="tk" text-anchor="end" transform="translate(621 562) rotate(-50)" dy="4.3">May 25</text>
<text class="tk" text-anchor="end" transform="translate(643 562) rotate(-50)" dy="4.3">Jun 1</text>
<text class="tk" text-anchor="end" transform="translate(665 562) rotate(-50)" dy="4.3">Jun 6</text>
<text class="tk" text-anchor="end" transform="translate(687 562) rotate(-50)" dy="4.3">Jun 9</text>
<text class="tk" text-anchor="end" transform="translate(709 562) rotate(-50)" dy="4.3">Jun 13</text>
<text class="tk" text-anchor="end" transform="translate(731 562) rotate(-50)" dy="4.3">Jun 15</text>
<text class="tk" text-anchor="end" transform="translate(753 562) rotate(-50)" dy="4.3">Jun 19</text>
<text class="tk" text-anchor="end" transform="translate(775 562) rotate(-50)" dy="4.3">Jun 21</text>
<text class="tk" text-anchor="end" transform="translate(797 562) rotate(-50)" dy="4.3">Jun 27</text>
<text class="tk" text-anchor="end" transform="translate(819 562) rotate(-50)" dy="4.3">Jun 29</text>
<text class="tk" text-anchor="end" transform="translate(841 562) rotate(-50)" dy="4.3">Jul 6</text>
<text class="tk" text-anchor="end" transform="translate(863 562) rotate(-50)" dy="4.3">Jul 11</text>
<text class="tk" text-anchor="end" transform="translate(885 562) rotate(-50)" dy="4.3">Jul 13</text>
<text class="tk" text-anchor="end" transform="translate(907 562) rotate(-50)" dy="4.3">Jul 18</text>
<text class="tk" text-anchor="end" transform="translate(929 562) rotate(-50)" dy="4.3">Jul 21</text>
<text class="tk" text-anchor="end" transform="translate(951 562) rotate(-50)" dy="4.3">Jul 25</text>
<text class="tk" text-anchor="end" transform="translate(973 562) rotate(-50)" dy="4.3">Aug 1</text>
<text class="tk" text-anchor="end" transform="translate(995 562) rotate(-50)" dy="4.3">Aug 4</text>
<text class="tk" text-anchor="end" transform="translate(1017 562) rotate(-50)" dy="4.3">Aug 8</text>
<text class="tk" text-anchor="end" transform="translate(1039 562) rotate(-50)" dy="4.3">Aug 21</text>
<text class="tk" text-anchor="end" transform="translate(1061 562) rotate(-50)" dy="4.3">Aug 30</text>
<text class="tk" text-anchor="end" transform="translate(1083 562) rotate(-50)" dy="4.3">Sep 11</text>
<rect x="461" y="605.5" width="38" height="12" fill="#fff" stroke="rgba(54,132,229,0.27)" stroke-width="3"/>
<text x="505" y="614" class="tk">Load Time</text>
<rect x="567" y="605" width="38" height="13" fill="rgba(54,132,229,0.36)" stroke="rgba(54,132,229,0.55)" stroke-width="1"/>
<text x="611" y="614" class="tk">Views</text>
<rect x="650.5" y="605" width="38" height="13" fill="rgba(54,132,229,0.6)" stroke="rgba(54,132,229,0.9)" stroke-width="1"/>
<text x="694" y="614" class="tk">Visitors</text>
</svg>
<div class="a th" style="left:70.3px;top:657px">Browser</div>
<div class="a th" style="left:213.5px;top:657px;letter-spacing:0.4px">Views</div>
<div class="a td" style="left:70.3px;top:691.7px">IE 11</div>
<div class="a tn" style="right:953.5px;top:690.9px">328</div>
<div class="pb" style="left:264.2px;top:681.2px;width:21.8px"></div>
<div class="a pt" style="left:264.2px;top:690.2px">23%</div>
<div class="a td" style="left:70.3px;top:725.9px">Chrome 114</div>
<div class="a tn" style="right:953.5px;top:725.1px">221</div>
<div class="pb" style="left:264.2px;top:715.4px;width:14.2px"></div>
<div class="a pt" style="left:264.2px;top:724.4px">15%</div>
<div class="a td" style="left:70.3px;top:760.1px">Chrome 112</div>
<div class="a tn" style="right:953.5px;top:759.3px">203</div>
<div class="pb" style="left:264.2px;top:749.6px;width:13.3px"></div>
<div class="a pt" style="left:264.2px;top:758.6px">14%</div>
<div class="a td" style="left:70.3px;top:794.3px">Chrome 111</div>
<div class="a tn" style="right:953.5px;top:793.5px">179</div>
<div class="pb" style="left:264.2px;top:783.8px;width:11.4px"></div>
<div class="a pt" style="left:264.2px;top:792.8px">12%</div>
<div class="a td" style="left:70.3px;top:828.5px">Chrome 113</div>
<div class="a tn" style="right:953.5px;top:827.7px">125</div>
<div class="pb" style="left:264.2px;top:818.0px;width:8.5px"></div>
<div class="a pt" style="left:264.2px;top:827.0px">9%</div>
<div class="a td" style="left:70.3px;top:862.7px">Electron 24</div>
<div class="a tn" style="right:953.5px;top:861.9px">102</div>
<div class="pb" style="left:264.2px;top:852.2px;width:6.6px"></div>
<div class="a pt" style="left:264.2px;top:861.2px">7%</div>
<div class="a td" style="left:70.3px;top:896.9px">Chrome 115</div>
<div class="a tn" style="right:953.5px;top:896.1px">79</div>
<div class="pb" style="left:264.2px;top:886.4px;width:4.8px"></div>
<div class="a pt" style="left:264.2px;top:895.4px">5%</div>
<div class="a td" style="left:70.3px;top:931.1px">Chrome 116</div>
<div class="a tn" style="right:953.5px;top:930.3px">59</div>
<div class="pb" style="left:264.2px;top:920.6px;width:3.8px"></div>
<div class="a pt" style="left:264.2px;top:929.6px">4%</div>
<div class="a th" style="left:435.0px;top:657px">Operating System</div>
<div class="a th" style="left:602.2px;top:657px;letter-spacing:0.4px">Views</div>
<div class="a td" style="left:435.0px;top:691.7px">Windows 10</div>
<div class="a tn" style="right:565.0px;top:690.9px">1k</div>
<div class="pb" style="left:652.4px;top:681.2px;width:95.0px"></div>
<div class="a pt" style="left:652.4px;top:690.2px">100%</div>
<div class="a th" style="left:799.8px;top:657px">Window Resolution</div>
<div class="a th" style="left:970px;top:657px;letter-spacing:0.4px">Views</div>
<div class="a td" style="left:799.8px;top:691.7px;letter-spacing:0.55px">2543×1333</div>
<div class="a tn" style="right:197.0px;top:690.9px">709</div>
<div class="pb" style="left:1020.5px;top:681.2px;width:46.5px"></div>
<div class="a pt" style="left:1020.5px;top:690.2px">49%</div>
<div class="a td" style="left:799.8px;top:725.9px;letter-spacing:0.55px">2533×1285</div>
<div class="a tn" style="right:197.0px;top:725.1px">176</div>
<div class="pb" style="left:1020.5px;top:715.4px;width:11.4px"></div>
<div class="a pt" style="left:1020.5px;top:724.4px">12%</div>
<div class="a td" style="left:799.8px;top:760.1px;letter-spacing:0.55px">1423×793</div>
<div class="a tn" style="right:197.0px;top:759.3px">64</div>
<div class="pb" style="left:1020.5px;top:749.6px;width:3.8px"></div>
<div class="a pt" style="left:1020.5px;top:758.6px">4%</div>
<div class="a td" style="left:799.8px;top:794.3px;letter-spacing:0.55px">1623×1333</div>
<div class="a tn" style="right:197.0px;top:793.5px">38</div>
<div class="pb" style="left:1020.5px;top:783.8px;width:2.8px"></div>
<div class="a pt" style="left:1020.5px;top:792.8px">3%</div>
<div class="a td" style="left:799.8px;top:828.5px;letter-spacing:0.55px">1792×1077</div>
<div class="a tn" style="right:197.0px;top:827.7px">37</div>
<div class="pb" style="left:1020.5px;top:818.0px;width:2.8px"></div>
<div class="a pt" style="left:1020.5px;top:827.0px">3%</div>
<div class="a td" style="left:799.8px;top:862.7px;letter-spacing:0.55px">1101×1333</div>
<div class="a tn" style="right:197.0px;top:861.9px">36</div>
<div class="pb" style="left:1020.5px;top:852.2px;width:2.8px"></div>
<div class="a pt" style="left:1020.5px;top:861.2px">3%</div>
<div class="a td" style="left:799.8px;top:896.9px;letter-spacing:0.55px">1573×1209</div>
<div class="a tn" style="right:197.0px;top:896.1px">32</div>
<div class="pb" style="left:1020.5px;top:886.4px;width:2.0px"></div>
<div class="a pt" style="left:1020.5px;top:895.4px">2%</div>
<div class="a td" style="left:799.8px;top:931.1px;letter-spacing:0.55px">1458×1277</div>
<div class="a tn" style="right:197.0px;top:930.3px">32</div>
<div class="pb" style="left:1020.5px;top:920.6px;width:2.0px"></div>
<div class="a pt" style="left:1020.5px;top:929.6px">2%</div>
<div class="a" style="left:0;top:940px;width:1200px;height:1px;background:#34505a"></div><div class="a" style="left:0;top:941px;width:1200px;height:1px;background:#cfcbc7"></div>
</body></html>
